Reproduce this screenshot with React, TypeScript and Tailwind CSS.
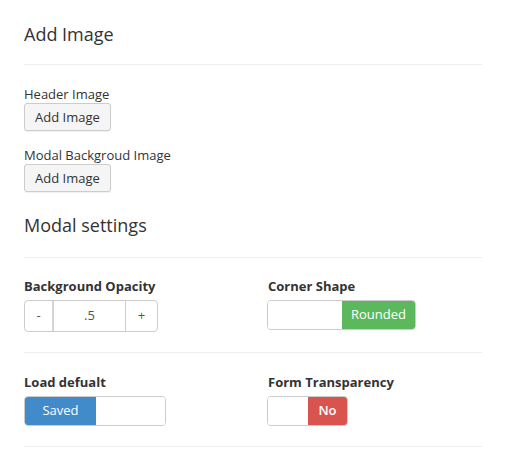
import React from "react";

const font = { fontFamily: '"Open Sans", "Liberation Sans", sans-serif' };

export default function App() {
  return (
    <div className="w-[508px] h-[466px] bg-white text-[#333] overflow-hidden" style={font}>
      <div className="ml-[24px] w-[458px]">
        <h3 className="pt-[22px] text-[18px] leading-[24px] font-normal">Add Image</h3>
        <div className="mt-[18px] h-px bg-[#eeeeee]" />
        <div className="mt-[20px] text-[13px] leading-[18px]">Header Image</div>
        <button className="h-[28px] w-[87px] rounded-[3px] border border-[#cccccc] bg-[#f5f5f5] pt-px text-[13px] text-[#333] shadow-[0_1px_1px_rgba(0,0,0,0.06)]">
          Add Image
        </button>
        <div className="mt-[15px] text-[13px] leading-[18px]">Modal Backgroud Image</div>
        <button className="h-[28px] w-[87px] rounded-[3px] border border-[#cccccc] bg-[#f5f5f5] pt-px text-[13px] text-[#333] shadow-[0_1px_1px_rgba(0,0,0,0.06)]">
          Add Image
        </button>
        <h3 className="mt-[21px] text-[18px] leading-[24px] font-normal">Modal settings</h3>
        <div className="mt-[20px] h-px bg-[#eeeeee]" />
        <div className="grid grid-cols-[243px_1fr] pt-[19px]">
          <div>
            <div className="text-[13px] leading-[18px] font-bold">Background Opacity</div>
            <div className="mt-[5px] flex h-[32px] w-[134px] rounded-[4px] border border-[#cccccc] text-[13px] text-[#555]">
              <div className="flex w-[29px] items-center justify-center border-r-2 border-[#d6d6d6]">-</div>
              <div className="flex w-[72px] items-center justify-center border-r border-[#cccccc]">.5</div>
              <div className="flex flex-1 items-center justify-center">+</div>
            </div>
          </div>
          <div>
            <div className="pl-px text-[13px] leading-[18px] font-bold">Corner Shape</div>
            <div className="mt-[5px] flex h-[30px] w-[149px] overflow-hidden rounded-[4px] border border-[#cccccc]">
              <div className="w-[74px] bg-white" />
              <div className="flex flex-1 items-center justify-center bg-[#5cb85c] text-[13px] text-white">Rounded</div>
            </div>
          </div>
        </div>
        <div className="mt-[20px] h-px bg-[#eeeeee]" />
        <div className="grid grid-cols-[243px_1fr] pt-[20px]">
          <div>
            <div className="text-[13px] leading-[18px] font-bold">Load defualt</div>
            <div className="mt-[5px] flex h-[30px] w-[142px] overflow-hidden rounded-[4px] border border-[#cccccc]">
              <div className="flex w-[71px] items-center justify-center bg-[#428bca] text-[13px] text-white">Saved</div>
              <div className="flex-1 bg-white" />
            </div>
          </div>
          <div>
            <div className="pl-px text-[13px] leading-[18px] font-bold">Form Transparency</div>
            <div className="mt-[5px] flex h-[30px] w-[81px] overflow-hidden rounded-[4px] border border-[#cccccc]">
              <div className="w-[40px] bg-white" />
              <div className="flex flex-1 items-center justify-center bg-[#d9534f] text-[13px] font-semibold text-white">No</div>
            </div>
          </div>
        </div>
        <div className="mt-[20px] h-px bg-[#eeeeee]" />
      </div>
    </div>
  );
}
